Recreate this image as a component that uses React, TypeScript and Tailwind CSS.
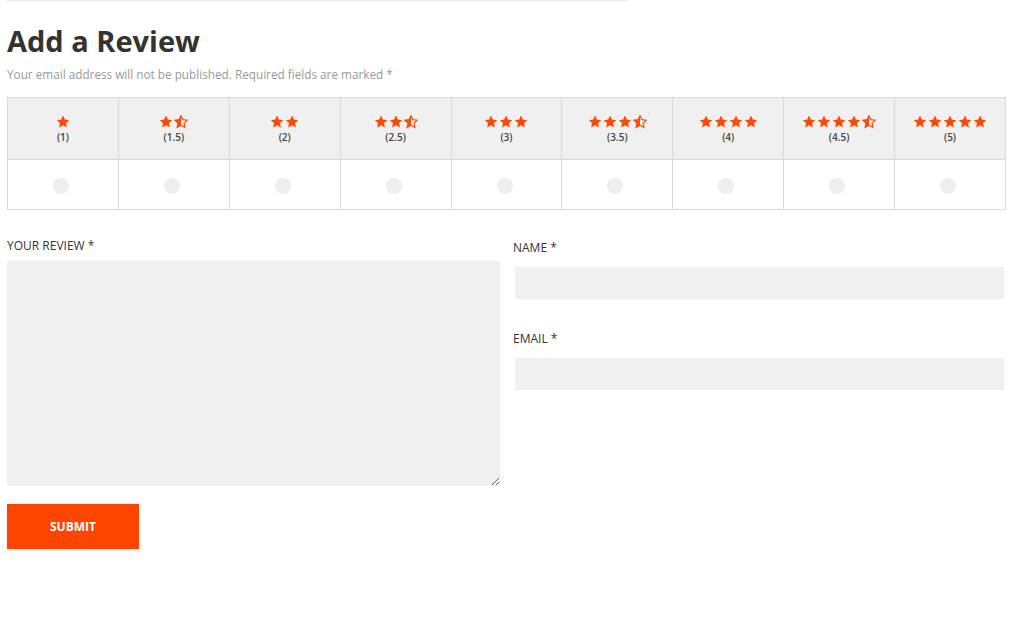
import { Fragment } from "react";

const STAR_PATH =
  "M12 1l3.2 6.9 7.5.9-5.5 5.1 1.5 7.4L12 17.6l-6.7 3.7 1.5-7.4-5.5-5.1 7.5-.9z";

function Star({ half = false }: { half?: boolean }) {
  return (
    <svg viewBox="0 0 24 24" className="h-[14px] w-[14px]">
      {half ? (
        <>
          <defs>
            <clipPath id="half-left">
              <rect x="0" y="0" width="12" height="24" />
            </clipPath>
          </defs>
          <path d={STAR_PATH} fill="none" stroke="#fc4a08" strokeWidth="2" />
          <path d={STAR_PATH} fill="#fc4a08" clipPath="url(#half-left)" />
        </>
      ) : (
        <path d={STAR_PATH} fill="#fc4a08" />
      )}
    </svg>
  );
}

const ratings = [1, 1.5, 2, 2.5, 3, 3.5, 4, 4.5, 5];

function RatingStars({ value }: { value: number }) {
  const full = Math.floor(value);
  const half = value % 1 !== 0;
  return (
    <div className="flex items-center justify-center gap-[1px]">
      {Array.from({ length: full }).map((_, i) => (
        <Star key={i} />
      ))}
      {half && <Star half />}
    </div>
  );
}

export default function App() {
  return (
    <div className="min-h-[629px] bg-white font-['Open_Sans',sans-serif] text-[#333]">
      <div className="ml-[7px] h-px w-[621px] bg-[#ebebeb]" />

      <div className="px-[7px]">
        <h2 className="mt-[20px] text-[29px] font-bold leading-[40px] text-[#333]">
          Add a Review
        </h2>
        <p className="mt-[5px] text-[11.75px] leading-[16px] text-[#999]">
          Your email address will not be published. Required fields are marked *
        </p>

        <table className="mt-[15px] w-[999px] table-fixed border-collapse">
          <thead>
            <tr className="h-[62px] bg-[#f0f0f0]">
              {ratings.map((r) => (
                <th
                  key={r}
                  className="border border-[#d9d9d9] p-0 align-middle font-normal"
                >
                  <div className="flex flex-col items-center gap-[2px] pt-[1px]">
                    <RatingStars value={r} />
                    <span className="text-[10px] font-semibold leading-[12px] text-[#444]">
                      ({r})
                    </span>
                  </div>
                </th>
              ))}
            </tr>
          </thead>
          <tbody>
            <tr className="h-[50px]">
              {ratings.map((r) => (
                <td key={r} className="border border-[#d9d9d9] p-0 align-middle">
                  <div className="ml-[45px] mt-[3px] h-[16px] w-[16px] rounded-full bg-[#eeeeee]" />
                </td>
              ))}
            </tr>
          </tbody>
        </table>

        <div className="mt-[28px] grid grid-cols-2 gap-[13px]">
          <div className="flex flex-col">
            <label className="text-[12px] leading-[16px] text-[#333]">
              YOUR REVIEW *
            </label>
            <textarea className="mt-[7px] h-[225px] w-full resize-y bg-[#f0f0f0] outline-none" />
          </div>
          <div className="flex flex-col pt-[2px]">
            {["NAME *", "EMAIL *"].map((label, i) => (
              <Fragment key={label}>
                <label
                  className={`text-[12px] leading-[16px] text-[#333] ${
                    i === 1 ? "mt-[32px]" : ""
                  }`}
                >
                  {label}
                </label>
                <input
                  type="text"
                  className="mx-[2px] mt-[11px] h-[32px] bg-[#f0f0f0] outline-none"
                />
              </Fragment>
            ))}
          </div>
        </div>

        <button className="mt-[18px] h-[45px] w-[132px] bg-[#fc4600] text-[12px] font-bold text-white shadow-[0_1px_3px_rgba(0,0,0,0.12)]">
          SUBMIT
        </button>
      </div>
    </div>
  );
}
